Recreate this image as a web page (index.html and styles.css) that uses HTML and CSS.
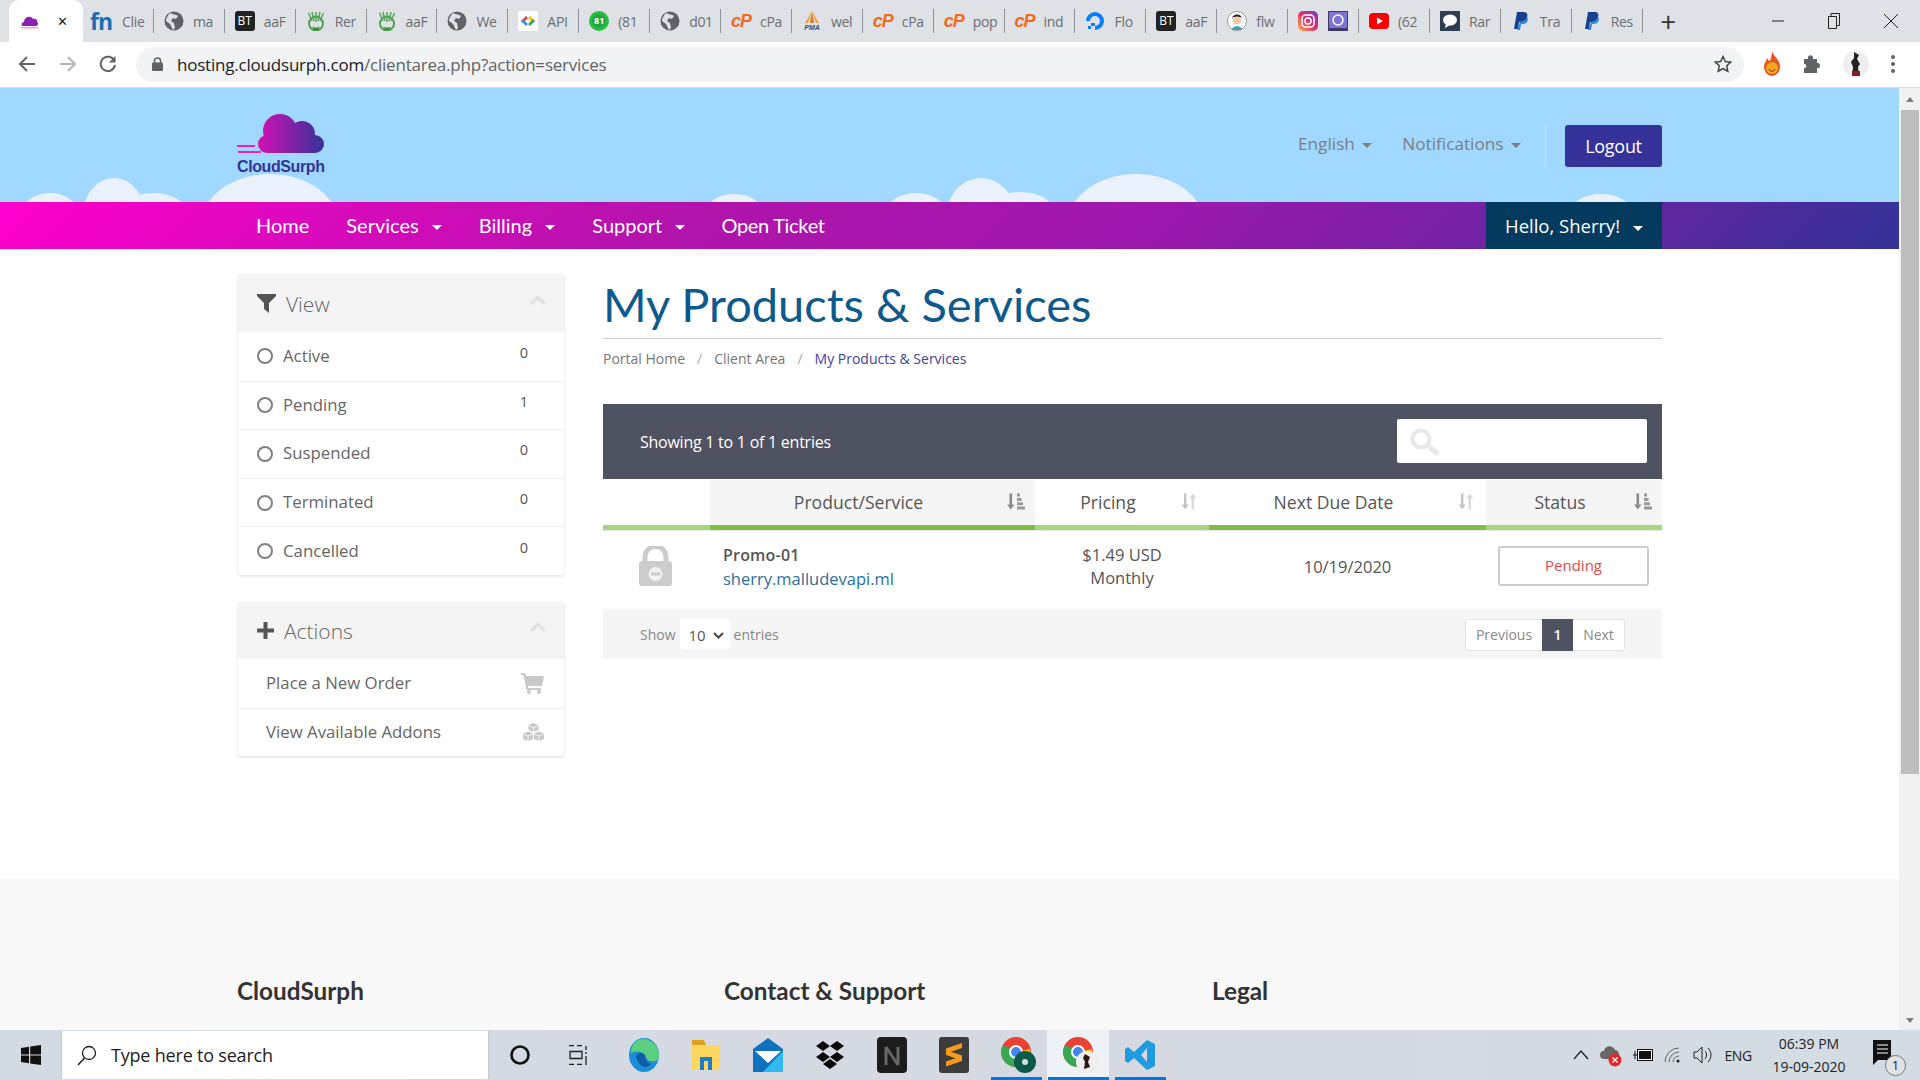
FILE: index.html
```html
<!DOCTYPE html>
<html lang="en">
<head>
    <meta charset="UTF-8">
    <title>My Products &amp; Services</title>
    <link rel="stylesheet" href="styles.css">
</head>
<body>
    <svg class="icon-defs" width="0" height="0">
        <defs>
            <linearGradient id="cloudGrad" gradientUnits="userSpaceOnUse" x1="20" x2="87" y1="0" y2="0">
                <stop offset="0" stop-color="#d60fb4"/>
                <stop offset="1" stop-color="#333399"/>
            </linearGradient>
            <linearGradient id="instaGrad" x1="0" x2="1" y1="1" y2="0">
                <stop offset="0" stop-color="#fdb04b"/>
                <stop offset=".5" stop-color="#e1306c"/>
                <stop offset="1" stop-color="#6a3fc8"/>
            </linearGradient>
            <symbol id="fav-cloud" viewBox="0 0 20 20">
                <path d="M3 15c-2 0-2-4 1-4 0-5 7-7 9-3 3-1 5 2 4 3 2 1 1 4-1 4z" fill="#8a1fb4"/>
                <path d="M1 16h17v1.500H1z" fill="#f3a0e8"/>
            </symbol>
            <symbol id="fav-globe" viewBox="0 0 20 20">
                <circle cx="10" cy="10" r="9.500" fill="#5f6368"/>
                <path d="M6 2c3 2 6 1 8 3l-2 3-3-1-2 3 3 2 1 5-2 2-3-6-4-3c0-3 2-6 4-8z" fill="#dee1e6"/>
            </symbol>
            <symbol id="fav-leaf" viewBox="0 0 20 20">
                <circle cx="10" cy="12.500" r="7" fill="none" stroke="#4a9a4a" stroke-width="1.800"/>
                <path d="M10 11V1M6 10 2.500 2M14 10l3.500-8M8 10 6 1M12 10l2-9" stroke="#5aa85a" stroke-width="1.500"/>
                <path d="M6 15c2 2 6 2 8 0l-2 4H8z" fill="#3d8a3d"/>
            </symbol>
            <symbol id="fav-paypal" viewBox="0 0 20 20">
                <path d="M6 1h6c4 0 5 2 4 5-1 4-4 5-7 5H8l-1 7H3z" fill="#1a3f8f"/>
                <path d="M16 6c2 2 1 7-5 7h-1l-1 6H6l3-8c4 0 6-2 7-5z" fill="#2a8bd8"/>
            </symbol>
            <symbol id="sort-active" viewBox="0 0 18 16">
                <path d="M2.500 0h2.600v11h2.400L3.800 16 0 11h2.500z" fill="#8a8a8a"/>
                <path d="M10 0h3v3h-3zM10 4.400h4.500v3H10zM10 8.800h6v3h-6zM10 13h8v3h-8z" fill="#9a9a9a"/>
            </symbol>
            <symbol id="sort-none" viewBox="0 0 18 16">
                <path d="M3 0h2.400v11h2.400L4.200 16 .6 11H3z" fill="#c4c4c4"/>
                <path d="M13 16h-2.400V5H8.200L11.800 0l3.600 5H13z" fill="#dadada"/>
            </symbol>
            <symbol id="chevron" viewBox="0 0 16 10">
                <path d="M8 0l8 7.500-2.500 2.500L8 4.800 2.500 10 0 7.500z" fill="#e2e2e2"/>
            </symbol>
        </defs>
    </svg>

    <div class="tabstrip">
        <div class="tab tab-active">
            <svg class="fav"><use href="#fav-cloud"/></svg>
            <span class="tab-close">&#10005;</span>
        </div>
        <div class="tab tab-fn">
            <span class="fav fav-fn">fn</span><span class="tab-title">Clie</span>
        </div>
        <div class="tab"><svg class="fav"><use href="#fav-globe"/></svg><span class="tab-title">ma</span></div>
        <div class="tab"><span class="fav fav-bt">BT</span><span class="tab-title">aaF</span></div>
        <div class="tab"><svg class="fav"><use href="#fav-leaf"/></svg><span class="tab-title">Rer</span></div>
        <div class="tab"><svg class="fav"><use href="#fav-leaf"/></svg><span class="tab-title">aaF</span></div>
        <div class="tab"><svg class="fav"><use href="#fav-globe"/></svg><span class="tab-title">We</span></div>
        <div class="tab">
            <svg class="fav" viewBox="0 0 20 20">
                <rect width="20" height="20" rx="2" fill="#fff"/>
                <path d="M8 5 3 10l2 2 5-5z" fill="#ea4335"/>
                <path d="M3 10l5 5 2-2-5-5z" fill="#4285f4"/>
                <path d="M12 5l5 5-2 2-5-5z" fill="#fbbc05"/>
                <path d="M17 10l-5 5-2-2 5-5z" fill="#34a853"/>
            </svg><span class="tab-title">API</span>
        </div>
        <div class="tab">
            <span class="fav fav-wa">81</span><span class="tab-title">(81</span>
        </div>
        <div class="tab"><svg class="fav"><use href="#fav-globe"/></svg><span class="tab-title">d01</span></div>
        <div class="tab"><span class="fav fav-cp">cP</span><span class="tab-title">cPa</span></div>
        <div class="tab">
            <svg class="fav" viewBox="0 0 20 20">
                <path d="M10 0 6 12H3zM10 0l4 12h3z" fill="#f2a33a"/>
                <path d="M10 0 8 12h4z" fill="#e07a1f"/>
                <text class="pma-label" x="10" y="19">PMA</text>
            </svg><span class="tab-title">wel</span>
        </div>
        <div class="tab"><span class="fav fav-cp">cP</span><span class="tab-title">cPa</span></div>
        <div class="tab"><span class="fav fav-cp">cP</span><span class="tab-title">pop</span></div>
        <div class="tab"><span class="fav fav-cp">cP</span><span class="tab-title">ind</span></div>
        <div class="tab">
            <svg class="fav" viewBox="0 0 20 20">
                <path d="M10 19v-4a5 5 0 1 0-5-5H1a9 9 0 1 1 9 9z" fill="#0a7cff"/>
                <path d="M6 15h4v-3H6zM3 18h3v-3H3z" fill="#0a7cff"/>
            </svg><span class="tab-title">Flo</span>
        </div>
        <div class="tab"><span class="fav fav-bt">BT</span><span class="tab-title">aaF</span></div>
        <div class="tab">
            <svg class="fav" viewBox="0 0 20 20">
                <circle cx="10" cy="10" r="9.500" fill="#fff" stroke="#999"/>
                <path d="M5 8c0-6 10-6 10 0l-1-2H6z" fill="#222"/>
                <circle cx="10" cy="9.500" r="4" fill="#f1c9a5"/>
                <path d="M5 19c0-5 10-5 10 0z" fill="#3aa0b8"/>
            </svg><span class="tab-title">flw</span>
        </div>
        <div class="tab tab-double">
            <svg class="fav" viewBox="0 0 20 20">
                <rect width="20" height="20" rx="5" fill="url(#instaGrad)"/>
                <rect x="4" y="4" width="12" height="12" rx="3.500" fill="none" stroke="#fff" stroke-width="1.500"/>
                <circle cx="10" cy="10" r="3" fill="none" stroke="#fff" stroke-width="1.500"/>
            </svg>
            <svg class="fav" viewBox="0 0 20 20">
                <rect width="20" height="20" fill="#3d3a66"/>
                <rect x="1" y="1" width="18" height="16" fill="#7d74d8"/>
                <circle cx="10" cy="9" r="5" fill="none" stroke="#fff" stroke-width="1.500"/>
            </svg>
        </div>
        <div class="tab">
            <svg class="fav" viewBox="0 0 20 20">
                <rect y="2" width="20" height="16" rx="4" fill="#f00"/>
                <path d="M8 6.500v7l6-3.500z" fill="#fff"/>
            </svg><span class="tab-title">(62</span>
        </div>
        <div class="tab">
            <svg class="fav" viewBox="0 0 20 20">
                <rect width="20" height="20" fill="#2c3e50"/>
                <ellipse cx="10" cy="9" rx="7" ry="5.500" fill="#fff"/>
                <path d="M6 12l-1 5 5-3z" fill="#fff"/>
            </svg><span class="tab-title">Rar</span>
        </div>
        <div class="tab"><svg class="fav"><use href="#fav-paypal"/></svg><span class="tab-title">Tra</span></div>
        <div class="tab"><svg class="fav"><use href="#fav-paypal"/></svg><span class="tab-title">Res</span></div>
        <div class="new-tab">+</div>
        <div class="window-controls">
            <svg width="12" height="12" viewBox="0 0 12 12"><path d="M0 6h12" stroke="#222"/></svg>
            <svg width="12" height="16" viewBox="0 0 12 16"><path d="M.5 3.500h8v12h-8zM3 3.500V.5h8.500v12h-3" fill="none" stroke="#222"/></svg>
            <svg width="14" height="14" viewBox="0 0 14 14"><path d="M0 0l14 14M14 0 0 14" stroke="#222"/></svg>
        </div>
    </div>

    <div class="toolbar">
        <svg class="tool-btn" viewBox="0 0 18 18"><path d="M17 9H3M9 2 2 9l7 7" fill="none" stroke="#5f6368" stroke-width="2"/></svg>
        <svg class="tool-btn" viewBox="0 0 18 18"><path d="M1 9h14M9 2l7 7-7 7" fill="none" stroke="#b4b7ba" stroke-width="2"/></svg>
        <svg class="tool-btn" viewBox="0 0 18 18"><path d="M15.500 6A7.200 7.200 0 1 0 16 10" fill="none" stroke="#5f6368" stroke-width="2"/><path d="M16.500 1v6.500H10z" fill="#5f6368"/></svg>
        <div class="omnibox">
            <svg class="omni-lock" width="11" height="14" viewBox="0 0 11 14"><path d="M2.500 6V4a3 3 0 0 1 6 0v2" fill="none" stroke="#5f6368" stroke-width="1.500"/><rect y="5.500" width="11" height="8.500" rx="1" fill="#5f6368"/></svg>
            <span class="url"><span class="url-host">hosting.cloudsurph.com</span>/clientarea.php?action=services</span>
            <svg class="omni-star" width="18" height="18" viewBox="0 0 18 18"><path d="M9 1.500l2.300 5 5.400.6-4 3.700 1.100 5.400L9 13.500l-4.800 2.700 1.100-5.400-4-3.700 5.400-.6z" fill="none" stroke="#444" stroke-width="1.500"/></svg>
        </div>
        <div class="extensions">
            <svg width="20" height="26" viewBox="0 0 20 26">
                <path d="M10 0c1 5 8 8 8 16a8 9 0 0 1-16 0c0-4 2-5 3-9 1 2 2 3 3 3 1-3 2-6 2-10z" fill="#e8541e"/>
                <circle cx="10" cy="17" r="6" fill="#f5a623"/>
                <path d="M7 18c1 3 5 3 6 0" fill="none" stroke="#6b3a10"/>
            </svg>
            <svg width="18" height="20" viewBox="0 0 18 20"><path d="M1 5h4c-1-5 6-5 5 0h4v4c4-1 4 6 0 5v5H1v-5c3 1 3-5 0-4z" fill="#5f6368"/></svg>
            <svg width="26" height="32" viewBox="0 0 26 32">
                <circle cx="13" cy="16" r="13" fill="#eee"/>
                <path d="M11 4l5 3-2 4 3 5-2 3 1 8-7 1 1-9-2-5 3-4z" fill="#222"/>
                <path d="M9 23h8v5H9z" fill="#8a1a24"/>
            </svg>
            <svg width="4" height="18" viewBox="0 0 4 18"><circle cx="2" cy="2" r="2" fill="#5f6368"/><circle cx="2" cy="9" r="2" fill="#5f6368"/><circle cx="2" cy="16" r="2" fill="#5f6368"/></svg>
        </div>
    </div>

    <div class="viewport">
        <div class="page">
            <header class="site-header">
                <svg class="clouds" width="1899" height="30" viewBox="0 172 1899 30">
                    <g fill="#e8f1fc">
                        <ellipse cx="50" cy="212" rx="27" ry="19"/>
                        <ellipse cx="114" cy="215" rx="31" ry="37"/>
                        <ellipse cx="153" cy="212" rx="33" ry="19"/>
                        <ellipse cx="270" cy="225" rx="69" ry="51"/>
                        <ellipse cx="734" cy="212" rx="28" ry="18"/>
                        <ellipse cx="916" cy="212" rx="29" ry="19"/>
                        <ellipse cx="981" cy="215" rx="34" ry="37"/>
                        <ellipse cx="1020" cy="212" rx="34" ry="20"/>
                        <ellipse cx="1136" cy="225" rx="69" ry="51"/>
                        <ellipse cx="1601" cy="212" rx="30" ry="18"/>
                    </g>
                </svg>
                <div class="wrap header-inner">
                    <div class="logo">
                        <svg width="88" height="42" viewBox="0 0 88 42">
                            <g fill="url(#cloudGrad)">
                                <circle cx="30" cy="32" r="9"/>
                                <circle cx="43" cy="19" r="17"/>
                                <circle cx="65" cy="22" r="13"/>
                                <circle cx="78" cy="32" r="9"/>
                                <path d="M30 23h48v18H30z"/>
                            </g>
                            <path d="M0 33h18v2H0zM1 39h23v2H1z" fill="#f01fc0"/>
                        </svg>
                        <span class="logo-text">CloudSurph</span>
                    </div>
                    <div class="header-right">
                        <span class="header-link">English <i class="caret"></i></span>
                        <span class="header-link">Notifications <i class="caret"></i></span>
                        <span class="header-sep"></span>
                        <a class="btn-logout">Logout</a>
                    </div>
                </div>
            </header>

            <nav class="main-nav">
                <div class="wrap nav-inner">
                    <a class="nav-item">Home</a>
                    <a class="nav-item">Services <i class="caret caret-white"></i></a>
                    <a class="nav-item">Billing <i class="caret caret-white"></i></a>
                    <a class="nav-item">Support <i class="caret caret-white"></i></a>
                    <a class="nav-item nav-ticket">Open Ticket</a>
                    <a class="nav-user">Hello, Sherry! <i class="caret caret-white"></i></a>
                </div>
            </nav>

            <div class="wrap content">
                <aside class="sidebar">
                    <div class="card">
                        <div class="card-head">
                            <svg class="head-icon" width="19" height="19" viewBox="0 0 19 19"><path d="M0 0h19v2l-7 7v10l-5-4V9L0 2z" fill="#555"/></svg>
                            <span class="card-title">View</span>
                            <svg class="head-chevron"><use href="#chevron"/></svg>
                        </div>
                        <div class="card-row"><i class="radio"></i><span class="row-label">Active</span><span class="row-count">0</span></div>
                        <div class="card-row"><i class="radio"></i><span class="row-label">Pending</span><span class="row-count">1</span></div>
                        <div class="card-row"><i class="radio"></i><span class="row-label">Suspended</span><span class="row-count">0</span></div>
                        <div class="card-row"><i class="radio"></i><span class="row-label">Terminated</span><span class="row-count">0</span></div>
                        <div class="card-row"><i class="radio"></i><span class="row-label">Cancelled</span><span class="row-count">0</span></div>
                    </div>
                    <div class="card">
                        <div class="card-head">
                            <svg class="head-icon" width="17" height="17" viewBox="0 0 17 17"><path d="M6.500 0h4v6.500H17v4h-6.500V17h-4v-6.500H0v-4h6.500z" fill="#555"/></svg>
                            <span class="card-title">Actions</span>
                            <svg class="head-chevron"><use href="#chevron"/></svg>
                        </div>
                        <div class="card-row card-action">
                            <span class="row-label">Place a New Order</span>
                            <svg width="23" height="21" viewBox="0 0 23 21"><path d="M0 0h4l1 3h18l-2 10H7l.4 2H20v2H5.500L2.500 2H0z" fill="#c8c8c8"/><circle cx="8" cy="19" r="2" fill="#c8c8c8"/><circle cx="18" cy="19" r="2" fill="#c8c8c8"/></svg>
                        </div>
                        <div class="card-row card-action">
                            <span class="row-label">View Available Addons</span>
                            <svg width="21" height="18" viewBox="0 0 21 18">
                                <g fill="#c8c8c8"><path d="M10.500 0l5 2v5l-5 2-5-2V2z"/><path d="M5 8.500l5 2v5.500l-5 2-5-2v-5.500z"/><path d="M16 8.500l5 2v5.500l-5 2-5-2v-5.500z"/></g>
                                <path d="M5.500 2.500l5 2 5-2M10.500 4.500V9M0 11l5 2 5-2M5 13v5M11 11l5 2 5-2M16 13v5" fill="none" stroke="#fff" stroke-width=".8"/>
                            </svg>
                        </div>
                    </div>
                </aside>

                <main class="main">
                    <h1 class="page-title">My Products &amp; Services</h1>
                    <div class="breadcrumb">
                        <span>Portal Home</span><i>/</i><span>Client Area</span><i>/</i><span class="crumb-current">My Products &amp; Services</span>
                    </div>

                    <div class="table-top">
                        <span>Showing 1 to 1 of 1 entries</span>
                        <div class="search-box">
                            <input type="text" class="search-input">
                            <svg class="search-icon" width="30" height="28" viewBox="0 0 30 28"><circle cx="11" cy="11" r="8.500" fill="none" stroke="#e6e8ea" stroke-width="4"/><path d="M17 17l11 9" stroke="#e6e8ea" stroke-width="5"/></svg>
                        </div>
                    </div>

                    <table class="services">
                        <colgroup>
                            <col class="col-icon"><col class="col-product"><col class="col-price"><col class="col-date"><col class="col-status">
                        </colgroup>
                        <thead>
                            <tr>
                                <th></th>
                                <th class="sorted sorted-bg">Product/Service<svg class="sort-icon"><use href="#sort-active"/></svg></th>
                                <th>Pricing<svg class="sort-icon"><use href="#sort-none"/></svg></th>
                                <th class="sorted">Next Due Date<svg class="sort-icon"><use href="#sort-none"/></svg></th>
                                <th class="sorted-bg">Status<svg class="sort-icon"><use href="#sort-active"/></svg></th>
                            </tr>
                        </thead>
                        <tbody>
                            <tr>
                                <td class="cell-icon">
                                    <svg width="33" height="40" viewBox="0 0 33 40">
                                        <path d="M6 17v-6a10.500 10.500 0 0 1 21 0v6" fill="none" stroke="#ccc" stroke-width="5"/>
                                        <rect y="15" width="33" height="25" rx="3" fill="#ccc"/>
                                        <circle cx="16.500" cy="28" r="7" fill="#f1f1f1"/>
                                        <rect x="12" y="26.500" width="9" height="3" fill="#ccc"/>
                                    </svg>
                                </td>
                                <td class="cell-product"><strong>Promo-01</strong><br><a class="domain">sherry.malludevapi.ml</a></td>
                                <td class="cell-center">$1.49 USD<br>Monthly</td>
                                <td class="cell-center">10/19/2020</td>
                                <td class="cell-center"><span class="status-pending">Pending</span></td>
                            </tr>
                        </tbody>
                    </table>

                    <div class="table-bottom">
                        <div class="length">
                            <span>Show</span>
                            <div class="length-select">10<svg width="11" height="7" viewBox="0 0 11 7"><path d="M1 1l4.500 4.500L10 1" fill="none" stroke="#444" stroke-width="2"/></svg></div>
                            <span>entries</span>
                        </div>
                        <div class="pager">
                            <a class="page-prev">Previous</a><a class="page-num">1</a><a class="page-next">Next</a>
                        </div>
                    </div>
                </main>
            </div>

            <footer class="site-footer">
                <div class="wrap footer-cols">
                    <h3>CloudSurph</h3>
                    <h3>Contact &amp; Support</h3>
                    <h3>Legal</h3>
                </div>
            </footer>
        </div>

        <div class="scrollbar">
            <i class="scroll-up"></i>
            <div class="scroll-thumb"></div>
            <i class="scroll-down"></i>
        </div>
    </div>

    <div class="taskbar">
        <div class="start">
            <svg width="20" height="20" viewBox="0 0 20 20"><path d="M0 3l8-1.200V9.500H0zM9.200 1.600 20 0v9.500H9.200zM0 10.500h8v7.700L0 17zM9.200 10.500H20V20L9.200 18.400z" fill="#111"/></svg>
        </div>
        <div class="task-search">
            <svg width="20" height="21" viewBox="0 0 20 21"><circle cx="12" cy="8" r="6.500" fill="none" stroke="#222" stroke-width="1.300"/><path d="M7.500 13 1 20" stroke="#222" stroke-width="1.500"/></svg>
            <span>Type here to search</span>
        </div>
        <div class="task-item"><svg width="20" height="20" viewBox="0 0 20 20"><circle cx="10" cy="10" r="8.500" fill="none" stroke="#111" stroke-width="2.600"/></svg></div>
        <div class="task-item"><svg class="taskview" width="20" height="20" viewBox="0 0 20 20"><path d="M0 .5h5M8 .5h5M0 19.500h5M8 19.500h5M1 6.500h12v7H1zM17 1v4M17 7v2M17 11v9" fill="none" stroke="#222" stroke-width="1.300"/></svg></div>
        <div class="task-item">
            <svg width="30" height="34" viewBox="0 0 30 34">
                <ellipse cx="15" cy="17" rx="15" ry="17" fill="#1a8fd8"/>
                <path d="M6 4c8-7 24-1 24 14 0 4-3 6-9 5-4-1-4-6-7-8-4-2-9-2-12 1 0-5 1-9 4-12z" fill="#5cd07f"/>
                <path d="M7 18c2-4 8-4 9 0 1 5 2 7 6 8-5 6-13 2-15-8z" fill="#0f5da8"/>
            </svg>
        </div>
        <div class="task-item">
            <svg width="28" height="30" viewBox="0 0 28 30">
                <path d="M0 0h12l2 5H0z" fill="#e0a21b"/>
                <path d="M0 5h28v25H0z" fill="#ffd75e"/>
                <path d="M8 30V17h12v13h-4v-9h-4v9z" fill="#1d7cc4"/>
            </svg>
        </div>
        <div class="task-item">
            <svg width="30" height="34" viewBox="0 0 30 34">
                <path d="M15 0l15 11v23H0V11z" fill="#0f72c0"/>
                <path d="M2 13h26L15 25z" fill="#fff"/>
                <path d="M30 13v21H10z" fill="#2fb9f0"/>
            </svg>
        </div>
        <div class="task-item">
            <svg width="30" height="28" viewBox="0 0 30 28" fill="#0a0a0a"><path d="M8 0l7 5-7 5-7-5zM22 0l7 5-7 5-7-5zM8 11l7 5-7 5-7-5zM22 11l7 5-7 5-7-5zM15 18l7 5-7 5-7-5z"/></svg>
        </div>
        <div class="task-item">
            <svg width="30" height="36" viewBox="0 0 30 36"><rect width="30" height="36" rx="4" fill="#1c1c1c"/><path d="M9 10v18M9 10l12 18M21 10v18" fill="none" stroke="#666" stroke-width="3"/></svg>
        </div>
        <div class="task-item">
            <svg width="30" height="36" viewBox="0 0 30 36"><rect width="30" height="36" rx="3" fill="#3c3c3c"/><path d="M23 6v5L7 16.500v-5zM7 13l16 5.500v5L7 18zM23 19v5L7 29.500v-5z" fill="#f59a1e"/></svg>
        </div>
        <div class="task-item task-open task-chrome">
            <svg width="36" height="36" viewBox="0 0 36 36">
                <circle cx="15" cy="15" r="15" fill="#e94235"/>
                <path d="M15 15 2 8a15 15 0 0 0 12 22z" fill="#34a853"/>
                <path d="M15 15l14-3a15 15 0 0 1-15 18z" fill="#fbbc05"/>
                <circle cx="15" cy="15" r="6" fill="#4285f4" stroke="#fff" stroke-width="2"/>
                <circle cx="24" cy="25" r="11" fill="#0c5a48"/>
                <circle cx="24" cy="25" r="3" fill="#cfe5dd"/>
            </svg>
        </div>
        <div class="task-item task-open task-active task-chrome">
            <svg width="36" height="36" viewBox="0 0 36 36">
                <circle cx="15" cy="15" r="15" fill="#e94235"/>
                <path d="M15 15 2 8a15 15 0 0 0 12 22z" fill="#34a853"/>
                <path d="M15 15l14-3a15 15 0 0 1-15 18z" fill="#fbbc05"/>
                <circle cx="15" cy="15" r="6" fill="#4285f4" stroke="#fff" stroke-width="2"/>
                <circle cx="24" cy="25" r="11" fill="#eee"/>
                <path d="M22 17l5 3-2 5 2 5-6 2 1-7-2-4z" fill="#321414"/>
            </svg>
        </div>
        <div class="task-item task-open">
            <svg width="30" height="30" viewBox="0 0 30 30">
                <path d="M22 0l8 4v22l-8 4L9 18l-6 5-3-2v-12l3-2 6 5zm0 8-6 7 6 7z" fill="#1f9be0"/>
            </svg>
        </div>
        <div class="tray">
            <svg width="16" height="10" viewBox="0 0 16 10"><path d="M1 9l7-8 7 8" fill="none" stroke="#222" stroke-width="1.300"/></svg>
            <svg width="22" height="24" viewBox="0 0 22 24"><path d="M4 16a4 4 0 0 1 0-8c1-6 9-6 11-1 4 0 5 5 3 9z" fill="#666"/><circle cx="15" cy="17" r="6.500" fill="#e02a2a"/><path d="M12.500 14.500l5 5M17.500 14.500l-5 5" stroke="#fff" stroke-width="1.300"/></svg>
            <svg width="20" height="14" viewBox="0 0 20 14"><rect x="4.500" y="1.500" width="15" height="11" fill="#fff" stroke="#111"/><rect x="6" y="3" width="12" height="8" fill="#111"/><path d="M0 7h4M2 3v8" stroke="#111"/></svg>
            <svg width="18" height="16" viewBox="0 0 18 16"><path d="M1 15A14 14 0 0 1 15 1M5 15A10 10 0 0 1 15 5M9 15a6 6 0 0 1 6-6" fill="none" stroke="#666"/><circle cx="14" cy="14" r="1.500" fill="#222"/></svg>
            <svg width="20" height="18" viewBox="0 0 20 18"><path d="M1 6h3l5-5v16l-5-5H1z" fill="none" stroke="#222"/><path d="M12 5c2 2 2 6 0 8M15 2c4 4 4 10 0 14" fill="none" stroke="#222"/></svg>
            <span class="tray-lang">ENG</span>
            <div class="clock"><span>06:39 PM</span><span>19-09-2020</span></div>
            <div class="notif">
                <svg width="20" height="28" viewBox="0 0 20 28"><path d="M1 0h18v20H6l-5 5z" fill="#111"/><path d="M5 5h11M5 9h11M5 13h11" stroke="#fff" stroke-width="1.200"/></svg>
                <span class="notif-count">1</span>
            </div>
        </div>
    </div>
</body>
</html>
```

FILE: styles.css
```css
* {
    box-sizing: border-box;
}

body {
    margin: 0;
    height: 1080px;
    width: 1920px;
    overflow: hidden;
    display: flex;
    flex-direction: column;
    font-family: "Open Sans", "Noto Sans", sans-serif;
    background-color: #fff;
}

.icon-defs {
    position: absolute;
}

/* browser tabs */
.tabstrip {
    height: 42px;
    flex: none;
    display: flex;
    align-items: center;
    padding-left: 9px;
    background-color: #dee1e6;
    font-size: 14px;
    color: #6a6e73;
}

.tab {
    width: 70.9px;
    height: 24px;
    flex: none;
    display: flex;
    align-items: center;
    gap: 9px;
    padding-left: 10px;
    border-right: 1px solid #8f9296;
}

.tab-active {
    width: 74px;
    height: 42px;
    padding-left: 11px;
    gap: 17px;
    background-color: #fff;
    border-right: 0;
    border-radius: 10px 10px 0 0;
}

.tab-fn {
    padding-left: 7px;
}

.tab-double {
    gap: 10px;
}

.tab-close {
    font-size: 13px;
    color: #222;
}

.tab-title {
    width: 30px;
    flex: none;
    white-space: nowrap;
    letter-spacing: -0.3px;
}

.fav {
    width: 20px;
    height: 20px;
    flex: none;
}

.fav-fn {
    width: 23px;
    font-size: 23px;
    line-height: 20px;
    font-weight: 700;
    letter-spacing: -1px;
    color: #1f6fb0;
}

.fav-bt {
    border-radius: 3px;
    background-color: #222;
    color: #fff;
    font-size: 12px;
    line-height: 20px;
    text-align: center;
}

.fav-cp {
    font-family: "Liberation Sans", sans-serif;
    font-size: 18px;
    line-height: 20px;
    font-weight: 700;
    font-style: italic;
    letter-spacing: -1px;
    color: #f26a21;
}

.fav-wa {
    border: 3px solid #25c03d;
    border-radius: 50%;
    background-color: #25a53d;
    color: #fff;
    font-size: 9px;
    font-weight: 700;
    line-height: 14px;
    text-align: center;
}

.pma-label {
    font-family: "Liberation Sans", sans-serif;
    font-size: 7px;
    font-weight: 700;
    font-style: italic;
    text-anchor: middle;
    fill: #3a4a70;
}

.new-tab {
    width: 30px;
    margin-left: 12px;
    font-size: 28px;
    line-height: 28px;
    text-align: center;
    color: #333;
}

.window-controls {
    margin-left: auto;
    width: 252px;
    padding: 0 22px 0 90px;
    display: flex;
    justify-content: space-between;
    align-items: center;
}

/* address bar */
.toolbar {
    height: 46px;
    flex: none;
    display: flex;
    align-items: center;
    padding: 0 0 1px 18px;
    border-bottom: 1px solid #dadce0;
    background-color: #fff;
}

.tool-btn {
    width: 18px;
    height: 18px;
    margin-right: 22.5px;
}

.omnibox {
    width: 1608px;
    height: 35px;
    margin-left: -4px;
    display: flex;
    align-items: center;
    padding: 0 12px 0 16px;
    border-radius: 18px;
    background-color: #f1f3f4;
    font-size: 17px;
    color: #5f6368;
}

.url {
    margin-left: 14.5px;
    letter-spacing: -0.21px;
}

.url-host {
    color: #202124;
}

.omni-star {
    margin-left: auto;
}

.extensions {
    flex: 1;
    display: flex;
    align-items: center;
    justify-content: space-between;
    padding: 0 25px 0 18px;
}

.viewport {
    flex: 1;
    display: flex;
    min-height: 0;
}

.page {
    flex: 1;
    min-width: 0;
    overflow: hidden;
}

.wrap {
    width: 1425px;
    margin: 0 auto;
}

/* site header */
.site-header {
    height: 114px;
    position: relative;
    background-color: #a0d8ff;
}

.clouds {
    position: absolute;
    left: 0;
    bottom: 0;
}

.header-inner {
    height: 100%;
    position: relative;
    display: flex;
    justify-content: space-between;
    padding-top: 24px;
}

.logo {
    display: flex;
    flex-direction: column;
}

.logo-text {
    margin-top: 3px;
    font-family: "Liberation Sans", sans-serif;
    font-size: 16px;
    line-height: 20px;
    font-weight: 700;
    letter-spacing: -0.4px;
    color: #353399;
}

.header-right {
    display: flex;
    align-items: flex-start;
    padding-top: 13px;
}

.header-link {
    margin: 4px 30px 0 0;
    font-size: 17.2px;
    line-height: 30px;
    color: #7b7f84;
}

.header-link:nth-child(2) {
    margin-right: 24px;
}

.header-sep {
    width: 1px;
    height: 42px;
    margin-right: 19px;
    background-color: #c9e4f6;
}

.btn-logout {
    width: 97px;
    height: 42px;
    border-radius: 3px;
    background-color: #353399;
    color: #fff;
    font-size: 18px;
    line-height: 42px;
    letter-spacing: -0.3px;
    text-align: center;
}

.caret {
    display: inline-block;
    width: 0;
    height: 0;
    margin-left: 3px;
    vertical-align: middle;
    border-top: 5px solid #7b7f84;
    border-left: 5px solid transparent;
    border-right: 5px solid transparent;
}

.caret-white {
    margin-left: 8px;
    border-top-color: #fff;
}

/* site nav */
.main-nav {
    height: 47px;
    background: linear-gradient(135deg, #ff00cc, #b014ab 37%, #9e18ae 60%, #5b289f 87%, #333399);
}

.nav-inner {
    display: flex;
    height: 100%;
}

.nav-item {
    padding: 0 18px 0 19px;
    font-family: "Lato", sans-serif;
    font-size: 20px;
    line-height: 47px;
    color: #fff;
}

.nav-ticket {
    margin-left: -1px;
    letter-spacing: -0.3px;
}

.nav-user {
    width: 176px;
    margin-left: auto;
    padding-left: 19px;
    background-color: #043a5e;
    font-size: 18.5px;
    line-height: 47px;
    color: #fff;
    white-space: nowrap;
}

/* page body */
.content {
    height: 630px;
    display: flex;
    gap: 39px;
    padding: 25px 0 0 1px;
}

.sidebar {
    width: 326px;
    flex: none;
    display: flex;
    flex-direction: column;
    gap: 27px;
}

.card {
    border-radius: 3px;
    box-shadow: 0 1px 3px rgba(0, 0, 0, 0.15);
    background-color: #fff;
}

.card-head {
    height: 58px;
    display: flex;
    align-items: center;
    gap: 10px;
    padding: 1px 18px 0 19px;
    border-radius: 3px 3px 0 0;
    background-color: #f4f4f4;
}

.card + .card .card-head {
    height: 57px;
}

.card-title {
    font-size: 21px;
    font-weight: 300;
    color: #666;
}

.head-chevron {
    width: 16px;
    height: 10px;
    margin: 0 0 7px auto;
}

.card-row {
    height: 48.6px;
    display: flex;
    align-items: center;
    padding: 0 19px;
    border-top: 1px solid #f0f0f0;
    font-size: 16.8px;
    color: #666;
}

.card-head + .card-row {
    border-top: 0;
}

.radio {
    width: 16px;
    height: 16px;
    margin-right: 10px;
    border: 2px solid #808080;
    border-radius: 50%;
}

.row-label {
    margin-top: -2px;
}

.row-count {
    width: 20px;
    margin: -8px 11px 0 auto;
    font-size: 14.5px;
    text-align: center;
    color: #555;
}

.card-action {
    justify-content: space-between;
    padding: 0 20px 0 28px;
}

/* services */
.main {
    flex: 1;
    min-width: 0;
    padding-top: 1px;
}

.page-title {
    margin: 0;
    height: 64px;
    border-bottom: 1px solid #ccc;
    font-family: "Lato", sans-serif;
    font-size: 47px;
    line-height: 58px;
    font-weight: 400;
    color: #0f5a8c;
}

.breadcrumb {
    height: 41px;
    padding-bottom: 2px;
    display: flex;
    align-items: center;
    font-size: 14px;
    color: #777;
}

.breadcrumb i {
    margin: 0 12px;
    font-style: normal;
    color: #aaa;
}

.crumb-current {
    color: #3f3f9e;
}

.table-top {
    height: 75px;
    margin-top: 24px;
    display: flex;
    align-items: center;
    justify-content: space-between;
    padding: 0 15px 0 37px;
    background-color: #4f5260;
    font-size: 16px;
    letter-spacing: -0.25px;
    color: #fff;
}

.search-box {
    position: relative;
    width: 250px;
    height: 44px;
    margin-bottom: 2px;
}

.search-input {
    width: 100%;
    height: 100%;
    border: 0;
    border-radius: 2px;
    background-color: #fff;
}

.search-icon {
    position: absolute;
    left: 13px;
    top: 9px;
}

.services {
    width: 100%;
    table-layout: fixed;
    border-collapse: separate;
    border-spacing: 0;
    margin-top: 1px;
}

.col-icon { width: 107px; }
.col-product { width: 325px; }
.col-price { width: 174px; }
.col-date { width: 277px; }
.col-status { width: 176px; }

.services th {
    position: relative;
    height: 50px;
    padding: 0 28px 1px 0;
    border-bottom: 5px solid #a6d67c;
    font-size: 17.6px;
    font-weight: 400;
    color: #555;
}

.services th.sorted {
    border-bottom-color: #7dc142;
}

.services th.sorted-bg {
    background-color: #f5f5f5;
}

.sort-icon {
    position: absolute;
    right: 10px;
    top: 13px;
    width: 18px;
    height: 17px;
}

.services td {
    height: 79px;
    padding: 0 0 8px;
    border-top: 1px solid #e8e8e8;
    font-size: 16.5px;
    line-height: 23px;
    color: #555;
}

.services .cell-icon {
    padding-left: 36px;
}

.cell-icon svg {
    display: block;
}

.services .cell-product {
    padding-left: 13px;
}

.cell-product strong {
    font-size: 16px;
    font-weight: 600;
    letter-spacing: 0.2px;
    color: #555;
}

.domain {
    color: #2a6f9e;
}

.cell-center {
    text-align: center;
}

.status-pending {
    display: block;
    width: 151px;
    height: 40px;
    margin-left: 12px;
    border: 2px solid #ccc;
    border-radius: 3px;
    font-size: 15px;
    font-weight: 500;
    line-height: 35px;
    color: #e54b4b;
}

.table-bottom {
    height: 50px;
    display: flex;
    align-items: center;
    justify-content: space-between;
    padding: 0 37px;
    background-color: #f5f5f5;
    font-size: 14px;
    color: #888;
}

.length {
    display: flex;
    align-items: center;
    gap: 4px;
}

.length-select {
    width: 50px;
    height: 30px;
    display: flex;
    align-items: center;
    justify-content: space-between;
    padding: 2px 6px 0 9px;
    border-radius: 3px;
    background-color: #fff;
    font-size: 15px;
    color: #555;
}

.pager {
    display: flex;
    height: 32px;
    margin-top: 2px;
    border: 1px solid #e2e2e2;
    border-radius: 3px;
    background-color: #fff;
    line-height: 30px;
    text-align: center;
}

.page-prev { width: 76px; }
.page-next { width: 51px; }

.page-num {
    width: 31px;
    margin: -1px 0;
    line-height: 32px;
    background-color: #4f5260;
    font-weight: 600;
    color: #fff;
}

/* footer */
.site-footer {
    height: 200px;
    padding-top: 96px;
    background-color: #f8f8f8;
}

.footer-cols {
    display: grid;
    grid-template-columns: 487px 488px 1fr;
}

.footer-cols h3 {
    margin: 0;
    font-family: "Lato", sans-serif;
    font-size: 24.3px;
    line-height: 32px;
    font-weight: 700;
    color: #333;
}

/* scrollbar */
.scrollbar {
    width: 21px;
    flex: none;
    display: flex;
    flex-direction: column;
    align-items: center;
    padding-top: 9px;
    background-color: #f1f1f1;
}

.scrollbar i {
    flex: none;
    width: 0;
    height: 0;
    border-left: 4px solid transparent;
    border-right: 4px solid transparent;
}

.scroll-up {
    border-bottom: 5px solid #7f7f7f;
}

.scroll-thumb {
    width: 18px;
    height: 664px;
    margin: 8px 0 auto;
    background-color: #bdbdbd;
}

.scroll-down {
    margin-bottom: 7px;
    border-top: 5px solid #7f7f7f;
}

/* windows taskbar */
.taskbar {
    height: 50px;
    flex: none;
    display: flex;
    align-items: center;
    background: linear-gradient(90deg, #d2dae4, #d6d9e2 60%, #d3dce4);
}

.start {
    width: 61px;
    display: flex;
    justify-content: center;
}

.task-search {
    width: 428px;
    height: 48px;
    display: flex;
    align-items: center;
    gap: 14px;
    padding-left: 15px;
    background-color: #fff;
    border: 1px solid #c8c8c8;
    border-width: 0 1px;
    font-size: 18px;
    letter-spacing: -0.2px;
    color: #222;
}

.task-item {
    position: relative;
    width: 62px;
    height: 50px;
    flex: none;
    display: flex;
    align-items: center;
    justify-content: center;
}

.taskview {
    margin-right: 6px;
}

.task-chrome svg {
    margin-left: 5px;
}

.task-open::after {
    content: "";
    position: absolute;
    left: 6px;
    right: 5px;
    bottom: 0;
    height: 3px;
    background-color: #0078d7;
}

.task-active {
    background-color: #eef1f5;
}

.task-active::after {
    left: 1px;
    right: 0;
}

.tray {
    margin-left: auto;
    display: flex;
    align-items: center;
    gap: 11px;
    padding-right: 20px;
    font-size: 14px;
    color: #222;
}

.tray-lang {
    margin-right: 4px;
    letter-spacing: -0.3px;
}

.clock {
    width: 84px;
    display: flex;
    flex-direction: column;
    align-items: center;
    gap: 4px;
    line-height: 19px;
}

.notif {
    position: relative;
    width: 28px;
    height: 30px;
    margin-left: 10px;
}

.notif-count {
    position: absolute;
    right: -6px;
    bottom: -6px;
    width: 21px;
    height: 21px;
    border: 1px solid #777;
    border-radius: 50%;
    background-color: #dfe3e8;
    font-size: 13px;
    line-height: 19px;
    text-align: center;
}
```
